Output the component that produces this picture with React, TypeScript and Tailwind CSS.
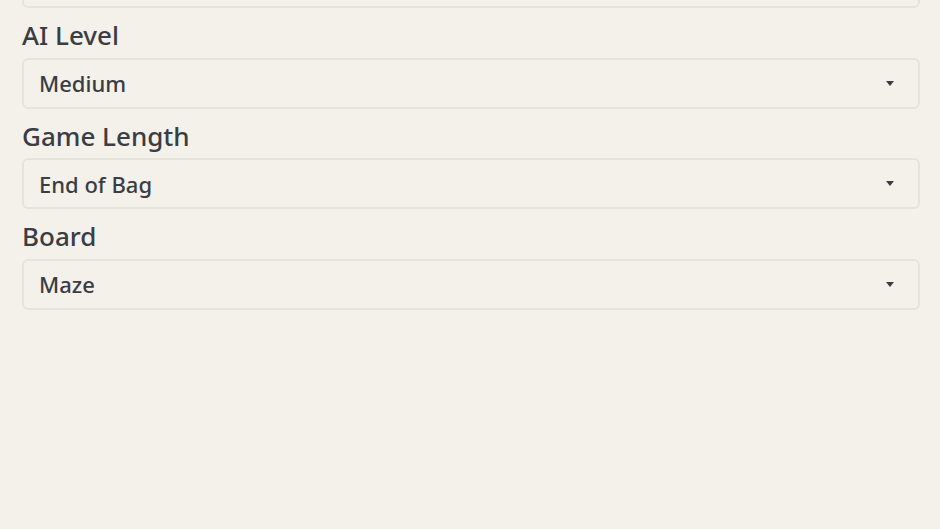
import { useState } from 'react';

interface Field {
  label: string;
  value: string;
  options: string[];
}

const fields: Field[] = [
  { label: 'AI Level', value: 'Medium', options: ['Easy', 'Medium', 'Hard'] },
  { label: 'Game Length', value: 'End of Bag', options: ['End of Bag', '150 Points', '300 Points'] },
  { label: 'Board', value: 'Maze', options: ['Classic', 'Maze', 'Random'] },
];

function SelectBox({ value }: { value: string }) {
  return (
    <div className="flex h-[51px] items-center justify-between rounded-[6px] border-2 border-[#e7e3db] bg-[#f4f1eb] pl-[15px] pr-[24px]">
      <span className="text-[22px] leading-none font-medium text-[#3a3d44]">{value}</span>
      <svg width="8" height="5" viewBox="0 0 8 5" className="fill-[#3a3d44]">
        <path d="M0 0h8L4 5z" />
      </svg>
    </div>
  );
}

export default function App() {
  const [values] = useState(fields.map((f) => f.value));

  return (
    <div
      className="h-[529px] overflow-hidden bg-[#f4f1eb] pl-[22px] pr-[20px]"
      style={{ fontFamily: '"Noto Sans", "DejaVu Sans", sans-serif' }}
    >
      {/* partially hidden field above */}
      <div className="-mt-[43px]">
        <SelectBox value="Two Player" />
      </div>
      {fields.map((field, i) => (
        <div key={field.label}>
          <div className="mt-[12px] mb-[7.5px] h-[30px] text-[26px] leading-[30px] font-medium text-[#3a3d44]">
            {field.label}
          </div>
          <SelectBox value={values[i]} />
        </div>
      ))}
    </div>
  );
}
